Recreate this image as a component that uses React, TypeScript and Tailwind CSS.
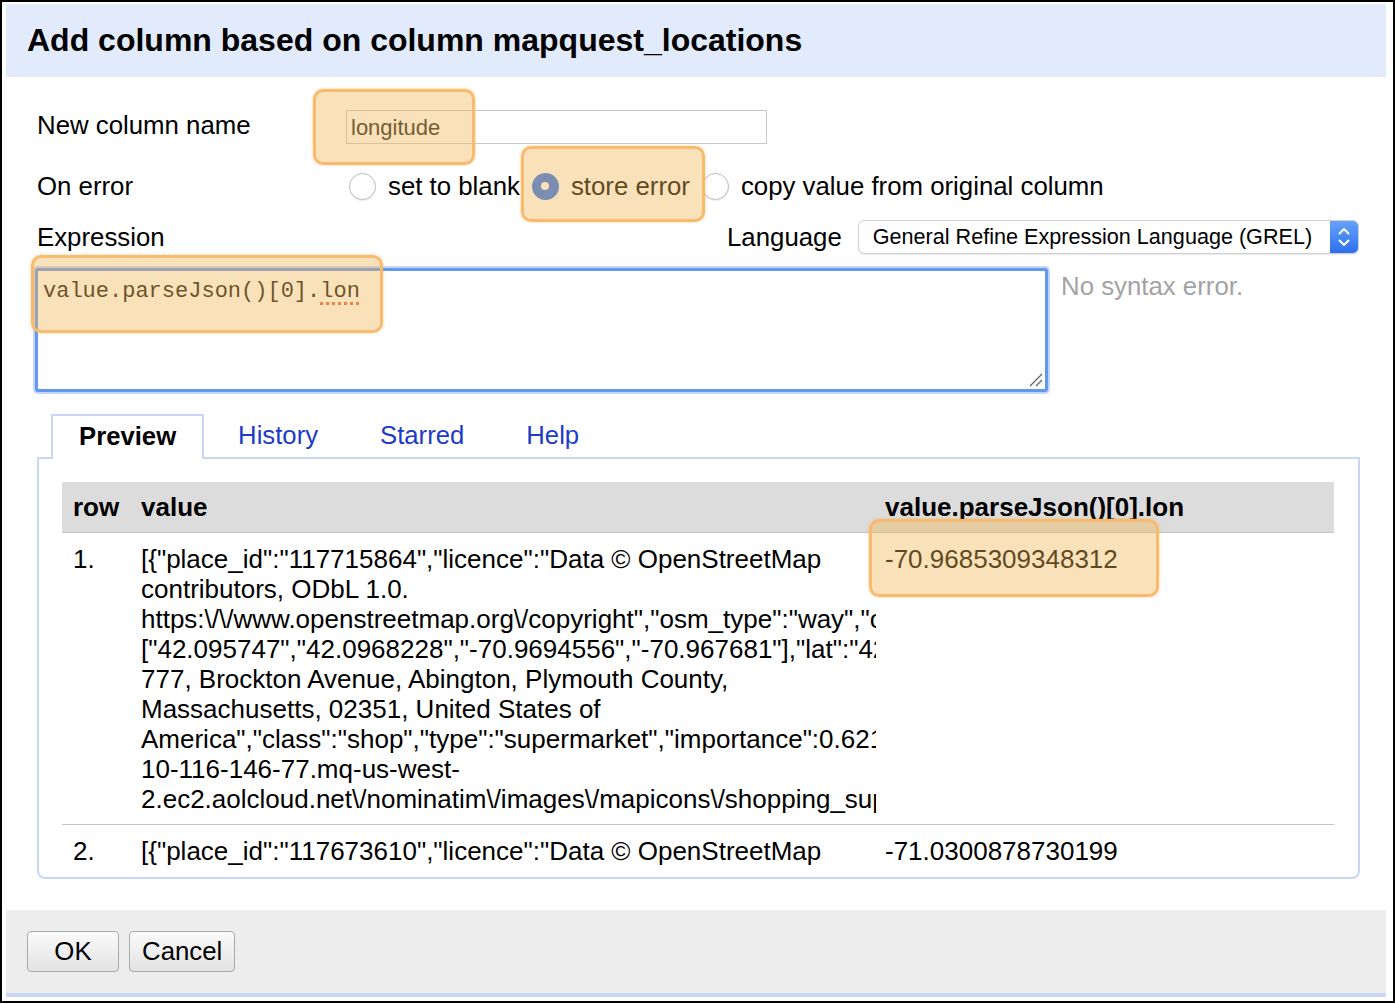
import React from 'react';

const valueLines = [
  '[{"place_id":"117715864","licence":"Data © OpenStreetMap',
  'contributors, ODbL 1.0.',
  'https:\\/\\/www.openstreetmap.org\\/copyright","osm_type":"way","osm_id":"40893946","boundingbox":',
  '["42.095747","42.0968228","-70.9694556","-70.967681"],"lat":"42.09624135","lon":"-70.9685309348312","display_name":"Stop & Shop,',
  '777, Brockton Avenue, Abington, Plymouth County,',
  'Massachusetts, 02351, United States of',
  'America","class":"shop","type":"supermarket","importance":0.621,"icon":"https:\\/\\/ip-',
  '10-116-146-77.mq-us-west-',
  '2.ec2.aolcloud.net\\/nominatim\\/images\\/mapicons\\/shopping_supermarket.p.20.png"}]',
];

const Highlight = ({ className }: { className: string }) => (
  <div
    className={`pointer-events-none absolute rounded-[10px] border-[3px] border-[#f8bb6e] bg-[rgba(240,180,80,0.4)] shadow-[0_0_3px_rgba(245,165,70,0.55)] ${className}`}
  />
);

const Radio = ({ checked }: { checked?: boolean }) =>
  checked ? (
    <span className="flex h-[27px] w-[27px] items-center justify-center rounded-full bg-[#2d73f0]">
      <span className="h-[8px] w-[8px] rounded-full bg-white" />
    </span>
  ) : (
    <span className="h-[27px] w-[27px] rounded-full border border-[#bcbcbc] bg-white shadow-[0_1px_1px_rgba(0,0,0,0.08)]" />
  );

export default function App() {
  return (
    <div className="relative h-[1003px] w-[1395px] border-2 border-black bg-white font-['Liberation_Sans',Arial,sans-serif] text-black">
      <div className="ml-[4px] mt-[2px] w-[1380px]">
        {/* Title bar */}
        <div className="flex h-[73px] items-center bg-[#e2ebfc] pb-[2px] pl-[21px] text-[32px] font-bold">
          Add column based on column mapquest_locations
        </div>

        <div className="pl-[31px] text-[25.8px]">
          {/* New column name */}
          <div className="mt-[28px] flex h-[40px] items-center">
            <div className="w-[309px]">New column name</div>
            <div className="mt-[4px] flex h-[34px] w-[421px] items-center border border-[#c9c9c9] pl-[4px] text-[22px] text-[#222]">
              longitude
            </div>
          </div>

          {/* On error */}
          <div className="mt-[21px] flex h-[40px] items-center">
            <div className="w-[309px]">On error</div>
            <div className="flex items-center gap-[12px] pl-[3px]">
              <Radio />
              <span>set to blank</span>
              <Radio checked />
              <span>store error</span>
              <Radio />
              <span>copy value from original column</span>
            </div>
          </div>

          {/* Expression / Language */}
          <div className="mt-[11px] flex h-[40px] items-center">
            <div className="w-[690px]">Expression</div>
            <div>Language</div>
            <div className="ml-[16px] flex h-[34px] w-[501px] overflow-hidden rounded-[6px] border border-[#cfcfcf] bg-white shadow-[0_1px_1px_rgba(0,0,0,0.08)]">
              <div className="flex flex-1 items-center pl-[14px] text-[21.6px]">General Refine Expression Language (GREL)</div>
              <div className="flex w-[28px] items-center justify-center bg-gradient-to-b from-[#66a3fa] to-[#2e6eee]">
                <svg width="28" height="34" viewBox="0 0 28 34" fill="none" stroke="white" strokeWidth="2" strokeLinecap="round" strokeLinejoin="round">
                  <path d="M9.5 13.5 L14 9 L18.5 13.5" />
                  <path d="M9.5 20.5 L14 25 L18.5 20.5" />
                </svg>
              </div>
            </div>
          </div>

          {/* Expression editor */}
          <div className="mt-[11px] flex items-start">
            <div className="relative -ml-[2px] h-[124px] w-[1013px] rounded-[3px] border-[3px] border-[#6497ef] bg-white pl-[5px] pt-[8px] font-['Liberation_Mono',monospace] text-[22px] leading-[26px] text-[#111] shadow-[0_0_0_2px_#c3d6f8]">
              value.parseJson()[0].
              <span className="underline decoration-[#e8643c] decoration-dotted decoration-[3px] underline-offset-[5px]">lon</span>
              <svg className="absolute bottom-[2px] right-[2px]" width="14" height="14" viewBox="0 0 14 14" stroke="#666" strokeWidth="1.2">
                <path d="M13 1 L1 13" />
                <path d="M13 7 L7 13" />
              </svg>
            </div>
            <div className="ml-[13px] mt-[3px] leading-[30px] text-[#a3a3a3]">No syntax error.</div>
          </div>

          {/* Tabs */}
          <div className="mt-[22px] flex items-end gap-[6px] pl-[14px] text-[25.7px]">
            <div className="relative z-10 -mb-[2px] flex h-[45px] items-center border-2 border-b-0 border-[#c8d7f7] bg-white px-[26px] pb-[3px] font-bold">
              Preview
            </div>
            <div className="flex h-[43px] items-center px-[28px] text-[#1d3ac9]">History</div>
            <div className="flex h-[43px] items-center px-[28px] text-[#1d3ac9]">Starred</div>
            <div className="flex h-[43px] items-center px-[28px] text-[#1d3ac9]">Help</div>
          </div>

          {/* Preview panel */}
          <div className="h-[422px] w-[1323px] overflow-hidden rounded-b-[8px] border-2 border-[#c8d7f7] pl-[23px] pr-[24px] pt-[23px] text-[26px]">
            <div className="flex h-[51px] items-center border-b border-[#c4c4c4] bg-[#dcdcdc] font-bold">
              <div className="w-[68px] pl-[11px]">row</div>
              <div className="w-[746px] pl-[11px]">value</div>
              <div className="flex-1 pl-[9px]">value.parseJson()[0].lon</div>
            </div>
            <div className="flex border-b border-[#c4c4c4] pb-[10px] pt-[11px] leading-[30px]">
              <div className="w-[68px] shrink-0 pl-[11px]">1.</div>
              <div className="w-[746px] shrink-0 overflow-hidden whitespace-nowrap pl-[11px]">
                {valueLines.map((line, i) => (
                  <div key={i}>{line}</div>
                ))}
              </div>
              <div className="flex-1 pl-[9px]">-70.9685309348312</div>
            </div>
            <div className="flex pt-[11px] leading-[30px]">
              <div className="w-[68px] shrink-0 pl-[11px]">2.</div>
              <div className="w-[746px] shrink-0 overflow-hidden whitespace-nowrap pl-[11px]">
                [{'{'}"place_id":"117673610","licence":"Data © OpenStreetMap
              </div>
              <div className="flex-1 pl-[9px]">-71.0300878730199</div>
            </div>
          </div>
        </div>

        {/* Footer */}
        <div className="mt-[31px] flex h-[83px] items-center gap-[10px] bg-[#ededed] pl-[21px] text-[25.8px]">
          <button className="flex h-[41px] w-[92px] items-center justify-center rounded-[4px] border border-[#a9a9a9] bg-gradient-to-b from-[#fafafa] to-[#e3e3e3]">
            OK
          </button>
          <button className="flex h-[41px] items-center justify-center rounded-[4px] border border-[#a9a9a9] bg-gradient-to-b from-[#fafafa] to-[#e3e3e3] px-[12px]">
            Cancel
          </button>
        </div>
        <div className="h-[4px] bg-[#c7d8f8]" />
      </div>

      {/* Annotation highlights */}
      <Highlight className="left-[311px] top-[87px] h-[76px] w-[162px]" />
      <Highlight className="left-[519px] top-[144px] h-[76px] w-[184px]" />
      <Highlight className="left-[29px] top-[253px] h-[78px] w-[352px]" />
      <Highlight className="left-[867px] top-[517px] h-[78px] w-[290px]" />
    </div>
  );
}
